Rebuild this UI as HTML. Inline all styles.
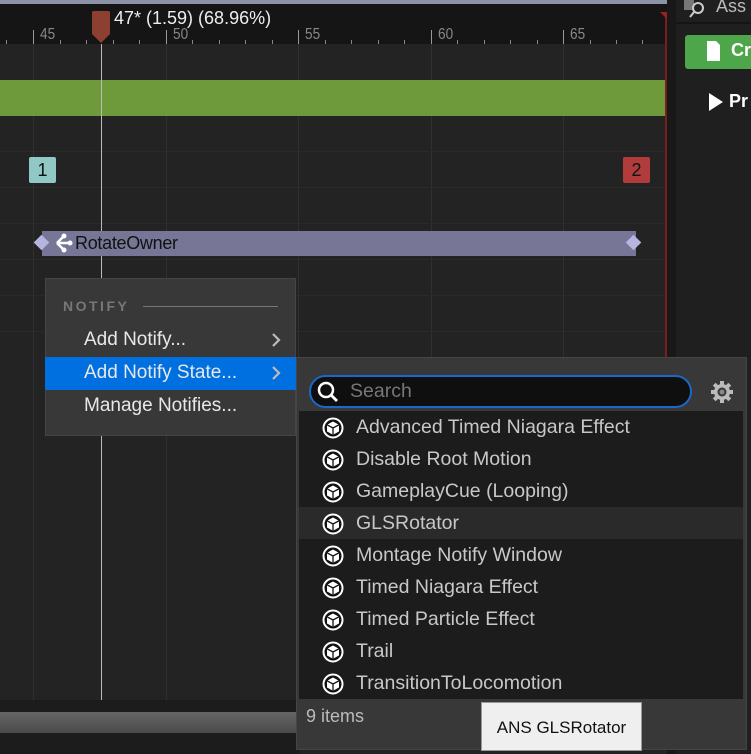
<!DOCTYPE html>
<html><head><meta charset="utf-8"><style>
*{margin:0;padding:0;box-sizing:border-box}
body{width:751px;height:754px;overflow:hidden;background:#232323;font-family:"Liberation Sans",sans-serif;position:relative;color:#ddd}
.a{position:absolute}
.vl{position:absolute;top:44px;height:666px;width:1px;background:#303030}
.hl{position:absolute;left:0;width:666px;height:1px;background:#2a2a2a}
.tick{position:absolute;top:40px;width:1px;height:4px;background:#888}
.maj{position:absolute;top:30px;width:1px;height:14px;background:#999}
.num{position:absolute;top:26px;font-size:16px;color:#888;transform:scaleX(.85);transform-origin:left}
.mi{position:absolute;left:84px;font-size:19px;color:#e8e8e8}
.row{position:absolute;left:299px;width:444px;height:32px}
.row span{position:absolute;left:57px;top:5px;font-size:19.5px;color:#c8c8c8}
.row svg{position:absolute;left:23px;top:6px}
</style></head><body>
<div class="a" style="left:0;top:0;width:668px;height:4px;background:#8d93a6"></div>
<div class="a" style="left:0;top:4px;width:668px;height:40px;background:#151515"></div>
<div class="vl" style="left:33px"></div><div class="vl" style="left:166px"></div><div class="vl" style="left:298px"></div><div class="vl" style="left:431px"></div><div class="vl" style="left:563px"></div>
<div class="hl" style="top:151px"></div><div class="hl" style="top:187px"></div><div class="hl" style="top:223px"></div><div class="hl" style="top:259px"></div><div class="hl" style="top:295px"></div><div class="hl" style="top:331px"></div>
<div class="maj" style="left:33px"></div><div class="maj" style="left:166px"></div><div class="maj" style="left:298px"></div><div class="maj" style="left:431px"></div><div class="maj" style="left:563px"></div>
<div class="num" style="left:40px">45</div><div class="num" style="left:173px">50</div><div class="num" style="left:305px">55</div><div class="num" style="left:438px">60</div><div class="num" style="left:570px">65</div>
<div class="tick" style="left:6px"></div><div class="tick" style="left:60px"></div><div class="tick" style="left:86px"></div><div class="tick" style="left:113px"></div><div class="tick" style="left:139px"></div><div class="tick" style="left:192px"></div><div class="tick" style="left:219px"></div><div class="tick" style="left:245px"></div><div class="tick" style="left:272px"></div><div class="tick" style="left:325px"></div><div class="tick" style="left:351px"></div><div class="tick" style="left:378px"></div><div class="tick" style="left:404px"></div><div class="tick" style="left:457px"></div><div class="tick" style="left:484px"></div><div class="tick" style="left:510px"></div><div class="tick" style="left:537px"></div><div class="tick" style="left:590px"></div><div class="tick" style="left:616px"></div><div class="tick" style="left:642px"></div>
<div class="a" style="left:0;top:80px;width:668px;height:36px;background:#6e9a3c;border-radius:0 3px 3px 0"></div>
<div class="a" style="left:101px;top:44px;width:1px;height:666px;background:#bbb"></div>
<svg class="a" style="left:91px;top:11px" width="20" height="33"><path d="M1 2 Q1 0 3 0 H17 Q19 0 19 2 V23 L10 32 L1 23Z" fill="#8e4030"/></svg>
<div class="a" style="left:114px;top:8px;font-size:18px;color:#eee">47* (1.59) (68.96%)</div>
<div class="a" style="left:665px;top:12px;width:2px;height:698px;background:#7a1d1d"></div>
<div class="a" style="left:660px;top:12px;width:0;height:0;border-left:7px solid transparent;border-top:7px solid #a02020"></div>
<div class="a" style="left:29px;top:157px;width:27px;height:26px;background:#8fc8c4;border-radius:2px;color:#111;font-size:18px;text-align:center;line-height:26px">1</div>
<div class="a" style="left:623px;top:157px;width:27px;height:26px;background:#b23c3c;border-radius:2px;color:#111;font-size:18px;text-align:center;line-height:26px">2</div>
<div class="a" style="left:42px;top:231px;width:594px;height:25px;background:#777696"></div>
<div class="a" style="left:36px;top:237px;width:11px;height:11px;background:#b5b5e0;transform:rotate(45deg)"></div>
<div class="a" style="left:628px;top:237px;width:11px;height:11px;background:#b5b5e0;transform:rotate(45deg)"></div>
<svg class="a" style="left:54px;top:233px" width="20" height="20"><path d="M3 10 H17 M3 10 L10 3 M3 10 L10 17" stroke="#fff" stroke-width="2.5" fill="none"/><circle cx="16" cy="10" r="2.5" fill="#fff"/><circle cx="10" cy="3" r="2.5" fill="#fff"/><circle cx="10" cy="17" r="2.5" fill="#fff"/></svg>
<div class="a" style="left:75px;top:233px;font-size:18px;color:#111;letter-spacing:-.3px">RotateOwner</div>
<div class="a" style="left:0;top:700px;width:300px;height:54px;background:#1c1c1c"></div>
<div class="a" style="left:0;top:712px;width:300px;height:21px;background:linear-gradient(#666,#4a4a4a)"></div>
<div class="a" style="left:667px;top:0;width:84px;height:754px;background:#181818"></div>
<div class="a" style="left:676px;top:0;width:75px;height:754px;background:#1f1f1f"></div>
<div class="a" style="left:676px;top:22px;width:75px;height:2px;background:#151515"></div>
<svg class="a" style="left:683px;top:0" width="24" height="20"><rect x="1" y="0" width="10" height="10" fill="#777"/><circle cx="15" cy="8" r="5" stroke="#ccc" stroke-width="2" fill="none"/><path d="M11 12 L7 17" stroke="#ccc" stroke-width="2"/></svg>
<div class="a" style="left:716px;top:-4px;font-size:18px;color:#bbb">Ass</div>
<div class="a" style="left:685px;top:35px;width:70px;height:34px;background:#4ea64a;border-radius:3px"></div>
<svg class="a" style="left:707px;top:41px" width="14" height="20"><path d="M0 0H9L13 4V20H0Z" fill="#fff"/></svg>
<div class="a" style="left:731px;top:40px;font-size:18px;color:#fff;font-weight:bold">Cr</div>
<svg class="a" style="left:709px;top:93px" width="14" height="18"><path d="M0 0L14 9L0 18Z" fill="#fff"/></svg>
<div class="a" style="left:729px;top:91px;font-size:18px;color:#fff;font-weight:bold">Pr</div>
<div class="a" style="left:45px;top:278px;width:251px;height:158px;background:#383838;border:1px solid #454545"></div>
<div class="a" style="left:63px;top:298px;font-size:14px;color:#777;letter-spacing:2.5px;font-weight:bold">NOTIFY</div>
<div class="a" style="left:143px;top:306px;width:135px;height:1px;background:#777"></div>
<div class="a" style="left:45px;top:357px;width:251px;height:33px;background:#0070e0"></div>
<div class="mi" style="top:329px">Add Notify...</div>
<div class="mi" style="top:362px">Add Notify State...</div>
<div class="mi" style="top:395px">Manage Notifies...</div>
<svg class="a" style="left:271px;top:333px" width="10" height="14"><path d="M2 1L8 7L2 13" stroke="#bbb" stroke-width="2.2" fill="none"/></svg>
<svg class="a" style="left:271px;top:366px" width="10" height="14"><path d="M2 1L8 7L2 13" stroke="#bbb" stroke-width="2.2" fill="none"/></svg>
<div class="a" style="left:296px;top:357px;width:451px;height:393px;background:#383838;border:1px solid #454545"></div>
<div class="a" style="left:309px;top:375px;width:383px;height:33px;background:#0f0f0f;border:2px solid #1a68c8;border-radius:17px"></div>
<svg class="a" style="left:316px;top:380px" width="24" height="24"><circle cx="10" cy="10" r="7" stroke="#fff" stroke-width="2.5" fill="none"/><path d="M15 15L21 21" stroke="#fff" stroke-width="2.8"/></svg>
<div class="a" style="left:350px;top:380px;font-size:19.5px;color:#777">Search</div>
<svg class="a" style="left:710px;top:380px" width="24" height="24" viewBox="0 0 24 24"><g fill="#bbb"><circle cx="12" cy="12" r="8"/><rect x="10" y="1" width="4" height="22"/><rect x="1" y="10" width="22" height="4"/><rect x="10" y="1" width="4" height="22" transform="rotate(45 12 12)"/><rect x="10" y="1" width="4" height="22" transform="rotate(-45 12 12)"/></g><circle cx="12" cy="12" r="4.5" fill="#383838"/><circle cx="12" cy="12" r="2.5" fill="#888"/></svg>
<div class="a" style="left:299px;top:411px;width:444px;height:288px;background:#1c1c1c"></div>
<div class="row" style="top:411px"><svg width="22" height="22" viewBox="0 0 22 22"><circle cx="11" cy="11" r="9.5" stroke="#fff" stroke-width="2" fill="#111"/><path d="M11 4.5L17 7.8V14.5L11 17.8L5 14.5V7.8Z" fill="#fff"/><path d="M5 7.8L11 11L17 7.8M11 11V17.8" stroke="#111" stroke-width="1.3" fill="none"/></svg><span>Advanced Timed Niagara Effect</span></div>
<div class="row" style="top:443px"><svg width="22" height="22" viewBox="0 0 22 22"><circle cx="11" cy="11" r="9.5" stroke="#fff" stroke-width="2" fill="#111"/><path d="M11 4.5L17 7.8V14.5L11 17.8L5 14.5V7.8Z" fill="#fff"/><path d="M5 7.8L11 11L17 7.8M11 11V17.8" stroke="#111" stroke-width="1.3" fill="none"/></svg><span>Disable Root Motion</span></div>
<div class="row" style="top:475px"><svg width="22" height="22" viewBox="0 0 22 22"><circle cx="11" cy="11" r="9.5" stroke="#fff" stroke-width="2" fill="#111"/><path d="M11 4.5L17 7.8V14.5L11 17.8L5 14.5V7.8Z" fill="#fff"/><path d="M5 7.8L11 11L17 7.8M11 11V17.8" stroke="#111" stroke-width="1.3" fill="none"/></svg><span>GameplayCue (Looping)</span></div>
<div class="row" style="top:507px;background:#2a2a2a"><svg width="22" height="22" viewBox="0 0 22 22"><circle cx="11" cy="11" r="9.5" stroke="#fff" stroke-width="2" fill="#111"/><path d="M11 4.5L17 7.8V14.5L11 17.8L5 14.5V7.8Z" fill="#fff"/><path d="M5 7.8L11 11L17 7.8M11 11V17.8" stroke="#111" stroke-width="1.3" fill="none"/></svg><span>GLSRotator</span></div>
<div class="row" style="top:539px"><svg width="22" height="22" viewBox="0 0 22 22"><circle cx="11" cy="11" r="9.5" stroke="#fff" stroke-width="2" fill="#111"/><path d="M11 4.5L17 7.8V14.5L11 17.8L5 14.5V7.8Z" fill="#fff"/><path d="M5 7.8L11 11L17 7.8M11 11V17.8" stroke="#111" stroke-width="1.3" fill="none"/></svg><span>Montage Notify Window</span></div>
<div class="row" style="top:571px"><svg width="22" height="22" viewBox="0 0 22 22"><circle cx="11" cy="11" r="9.5" stroke="#fff" stroke-width="2" fill="#111"/><path d="M11 4.5L17 7.8V14.5L11 17.8L5 14.5V7.8Z" fill="#fff"/><path d="M5 7.8L11 11L17 7.8M11 11V17.8" stroke="#111" stroke-width="1.3" fill="none"/></svg><span>Timed Niagara Effect</span></div>
<div class="row" style="top:603px"><svg width="22" height="22" viewBox="0 0 22 22"><circle cx="11" cy="11" r="9.5" stroke="#fff" stroke-width="2" fill="#111"/><path d="M11 4.5L17 7.8V14.5L11 17.8L5 14.5V7.8Z" fill="#fff"/><path d="M5 7.8L11 11L17 7.8M11 11V17.8" stroke="#111" stroke-width="1.3" fill="none"/></svg><span>Timed Particle Effect</span></div>
<div class="row" style="top:635px"><svg width="22" height="22" viewBox="0 0 22 22"><circle cx="11" cy="11" r="9.5" stroke="#fff" stroke-width="2" fill="#111"/><path d="M11 4.5L17 7.8V14.5L11 17.8L5 14.5V7.8Z" fill="#fff"/><path d="M5 7.8L11 11L17 7.8M11 11V17.8" stroke="#111" stroke-width="1.3" fill="none"/></svg><span>Trail</span></div>
<div class="row" style="top:667px"><svg width="22" height="22" viewBox="0 0 22 22"><circle cx="11" cy="11" r="9.5" stroke="#fff" stroke-width="2" fill="#111"/><path d="M11 4.5L17 7.8V14.5L11 17.8L5 14.5V7.8Z" fill="#fff"/><path d="M5 7.8L11 11L17 7.8M11 11V17.8" stroke="#111" stroke-width="1.3" fill="none"/></svg><span>TransitionToLocomotion</span></div>
<div class="a" style="left:306px;top:706px;font-size:18px;color:#bbb">9 items</div>
<div class="a" style="left:481px;top:702px;width:161px;height:49px;background:#efefef;border:1px solid #999;color:#111;font-size:17px;text-align:center;line-height:49px">ANS GLSRotator</div>
</body></html>
